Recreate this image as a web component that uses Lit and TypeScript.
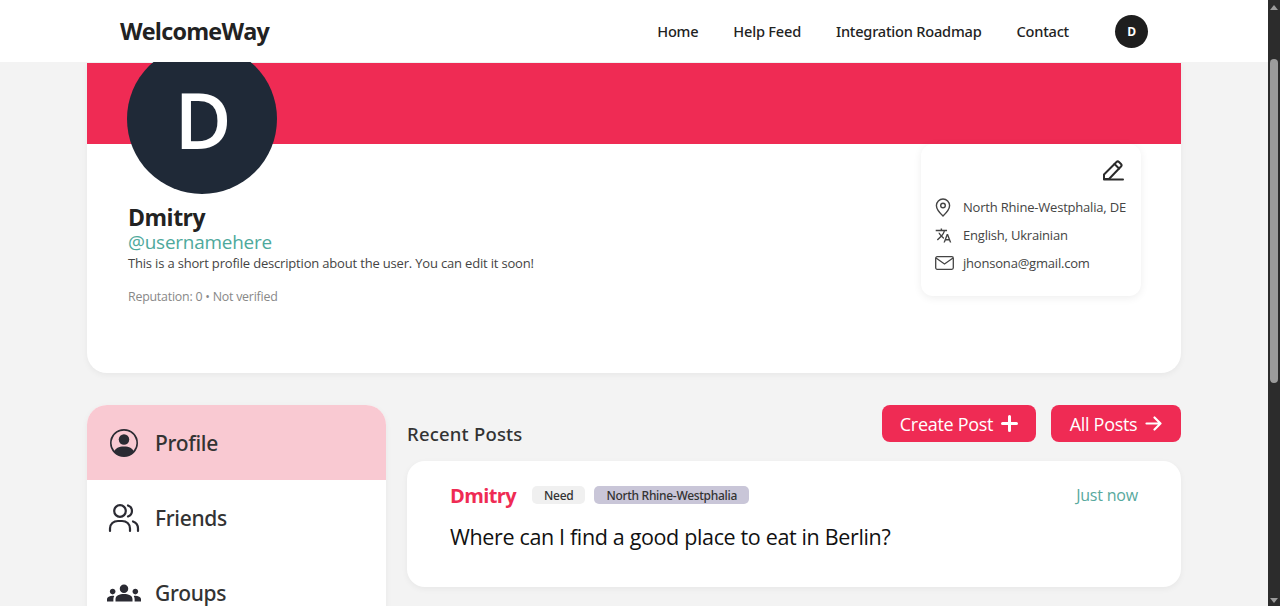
import { LitElement, html, css } from "lit";
import { customElement } from "lit/decorators.js";

@customElement("app-root")
export class AppRoot extends LitElement {
  static styles = css`
    :host { display: block; height: 606px; overflow: hidden; font-family: "Open Sans", "Noto Sans", sans-serif; background: #f3f3f3; color: #222; }
    * { box-sizing: border-box; }
    .shell { display: flex; height: 606px; overflow: hidden; }
    .page { width: 1268px; flex: none; height: 606px; overflow: hidden; }
    .scrollbar { width: 12px; flex: none; background: #2c2c2c; display: flex; flex-direction: column; align-items: center; justify-content: space-between; padding: 5px 0 3px; }
    .thumb { width: 8px; height: 324px; background: #9b9b9b; border-radius: 4px; margin-top: 49px; margin-bottom: auto; }
    .arrow-up { width: 0; height: 0; border-left: 4px solid transparent; border-right: 4px solid transparent; border-bottom: 5px solid #9b9b9b; }
    .arrow-down { width: 0; height: 0; border-left: 4px solid transparent; border-right: 4px solid transparent; border-top: 5px solid #9b9b9b; }
    header { position: relative; z-index: 2; height: 62px; background: #fff; display: flex; align-items: center; padding: 0 120px; }
    .logo { font-size: 23.4px; font-weight: 700; color: #222; letter-spacing: -0.78px; flex: 1; }
    nav { display: flex; align-items: center; gap: 35px; font-family: "Noto Sans", sans-serif; font-size: 14.6px; font-weight: 500; color: #222; letter-spacing: -0.22px; }
    .mini { width: 33px; height: 33px; border-radius: 50%; background: #1e1e1e; color: #fff; font-family: "Open Sans", sans-serif; font-size: 12px; font-weight: 700; display: flex; align-items: center; justify-content: center; margin-left: 11px; }
    main { padding: 1px 0 0 87px; width: 1181px; }
    .card { background: #fff; border-radius: 0 0 20px 20px; height: 310px; box-shadow: 0 2px 6px rgba(0,0,0,.05); display: flex; flex-direction: column; }
    .banner { height: 81px; background: #ef2b54; flex: none; }
    .body { display: flex; justify-content: space-between; padding: 0 40px; flex: 1; }
    .who { display: flex; flex-direction: column; }
    .avatar { width: 150px; height: 150px; border-radius: 50%; background: #1f2937; color: #fff; font-size: 78px; font-weight: 600; display: flex; align-items: center; justify-content: center; margin-top: -100px; position: relative; padding-left: 2px; }
    .texts { padding-left: 1px; }
    .name { font-size: 23px; font-weight: 700; color: #222; line-height: 28px; margin-top: 9px; letter-spacing: -0.5px; }
    .handle { font-size: 18.9px; color: #4ea99c; line-height: 22px; letter-spacing: -0.2px; }
    .bio { font-size: 13px; color: #444; line-height: 20px; letter-spacing: -0.18px; }
    .rep { font-size: 12.4px; color: #888; line-height: 18px; margin-top: 15px; letter-spacing: -0.23px; }
    .info { width: 220px; height: 152px; background: #fff; border-radius: 12px; box-shadow: 0 2px 8px rgba(0,0,0,.07); padding: 15px 14px 0 14px; display: flex; flex-direction: column; overflow: hidden; }
    .edit { align-self: flex-end; height: 22px; margin-right: 3px; margin-bottom: 12px; display: block; }
    .line { display: flex; align-items: center; font-size: 13px; color: #444; height: 28.2px; white-space: nowrap; letter-spacing: -0.2px; }
    .line .ic { width: 28px; flex: none; display: flex; align-items: center; }
    .lower { display: flex; gap: 21px; margin-top: 32px; }
    .side { width: 299px; flex: none; background: #fff; border-radius: 20px 20px 0 0; height: 220px; overflow: hidden; box-shadow: 0 2px 6px rgba(0,0,0,.05); }
    .tab { height: 75px; display: flex; align-items: center; gap: 14px; padding-left: 20px; font-family: "Noto Sans", sans-serif; font-size: 21px; font-weight: 500; color: #333; letter-spacing: -0.3px; }
    .tab.active { background: #f9c9d2; }
    .tab .ico { width: 34px; display: flex; justify-content: center; flex: none; }
    .content { flex: 1; min-width: 0; }
    .head { display: flex; align-items: flex-end; justify-content: space-between; height: 37px; }
    .head h2 { margin: 0; font-family: "Noto Sans", sans-serif; font-size: 18.5px; font-weight: 500; color: #333; line-height: 24px; position: relative; top: 4px; letter-spacing: 0.2px; }
    .btns { display: flex; gap: 15px; align-self: stretch; }
    .btn { height: 37px; background: #ef2b54; color: #fff; border-radius: 8px; display: flex; align-items: center; justify-content: center; gap: 8px; font-size: 18px; letter-spacing: -0.3px; }
    .b1 { width: 154px; } .b2 { width: 130px; }
    .post { margin-top: 19px; background: #fff; border-radius: 18px; height: 126px; padding: 21px 43px 0; box-shadow: 0 2px 6px rgba(0,0,0,.05); }
    .meta { display: flex; align-items: center; height: 26px; }
    .author { font-size: 20px; font-weight: 700; color: #ef2b54; letter-spacing: -0.6px; margin-right: 16px; }
    .tag { height: 18px; border-radius: 5px; font-family: "Noto Sans", sans-serif; font-size: 12px; font-weight: 500; color: #333; display: flex; align-items: center; padding: 0 12px; margin-right: 9px; letter-spacing: -0.3px; }
    .tag.need { background: #f0f0f0; }
    .tag.region { background: #c9c6d8; }
    .time { margin-left: auto; font-size: 16px; color: #57a99e; letter-spacing: -0.2px; }
    .text { margin-top: 14px; font-size: 21.5px; color: #111; line-height: 30px; letter-spacing: -0.35px; }
  `;

  render() {
    return html`<div class="shell">
      <div class="page">
        <header>
          <div class="logo">WelcomeWay</div>
          <nav>
            <span>Home</span><span>Help Feed</span><span>Integration Roadmap</span><span>Contact</span>
            <div class="mini">D</div>
          </nav>
        </header>
        <main>
          <section class="card">
            <div class="banner"></div>
            <div class="body">
              <div class="who">
                <div class="avatar">D</div>
                <div class="texts">
                  <div class="name">Dmitry</div>
                  <div class="handle">@usernamehere</div>
                  <div class="bio">This is a short profile description about the user. You can edit it soon!</div>
                  <div class="rep">Reputation: 0 • Not verified</div>
                </div>
              </div>
              <aside class="info">
                <svg class="edit" width="22" height="22" viewBox="0 0 22 22" fill="none" stroke="#2b2b2b" stroke-width="2" stroke-linejoin="round" stroke-linecap="round">
                  <path d="M2 15.500 14.500 3a1.800 1.800 0 0 1 2.500 0l2 2a1.800 1.800 0 0 1 0 2.500L7 20H2z"/><path d="M12.500 5l4.500 4.500"/><path d="M2 20.500h19"/>
                </svg>
                <div class="line"><span class="ic"><svg width="16" height="19" viewBox="0 0 16 19" fill="none" stroke="#444" stroke-width="1.400"><path d="M8 1a6.600 6.600 0 0 0-6.600 6.600C1.400 12 8 18 8 18s6.600-6 6.600-10.400A6.600 6.600 0 0 0 8 1z"/><circle cx="8" cy="7.500" r="2.300"/></svg></span>North Rhine-Westphalia, DE</div>
                <div class="line"><span class="ic"><svg width="17" height="17" viewBox="0 0 24 24" fill="#444"><path d="M12.870 15.070l-2.540-2.510.030-.030c1.740-1.940 2.980-4.170 3.710-6.530H17V4h-7V2H8v2H1v1.990h11.170C11.500 7.920 10.440 9.750 9 11.350 8.070 10.320 7.300 9.190 6.690 8h-2c.730 1.630 1.730 3.170 2.980 4.560l-5.090 5.020L4 19l5-5 3.110 3.110.760-2.040zM18.500 10h-2L12 22h2l1.120-3h4.750L21 22h2l-4.500-12zm-2.620 7l1.620-4.330L19.120 17h-3.240z"/></svg></span>English, Ukrainian</div>
                <div class="line"><span class="ic"><svg width="19" height="14" viewBox="0 0 19 14" fill="none" stroke="#444" stroke-width="1.300"><rect x=".7" y=".7" width="17.600" height="12.600" rx="1.500"/><path d="M1 2l8.500 6L18 2"/></svg></span>jhonsona@gmail.com</div>
              </aside>
            </div>
          </section>
          <div class="lower">
            <div class="side">
              <div class="tab active"><span class="ico"><svg width="28" height="28" viewBox="0 0 16 16" fill="#2b2b33"><path d="M11 6a3 3 0 1 1-6 0 3 3 0 0 1 6 0z"/><path fill-rule="evenodd" d="M0 8a8 8 0 1 1 16 0A8 8 0 0 1 0 8zm8-7a7 7 0 0 0-5.468 11.370C3.242 11.226 4.805 10 8 10s4.757 1.225 5.468 2.370A7 7 0 0 0 8 1z"/></svg></span>Profile</div>
              <div class="tab"><span class="ico"><svg width="32" height="30" viewBox="0 0 32 30" fill="none" stroke="#2b2b33" stroke-width="2.200" stroke-linecap="round"><circle cx="12" cy="8" r="5.800"/><path d="M2 28v-2.500C2 21 5.500 18 10 18h4c4.500 0 8 3 8 7.500V28"/><path d="M20 2.500a5.800 5.800 0 0 1 0 11"/><path d="M25 18.500c2.900 1 5 3.500 5 7V28"/></svg></span>Friends</div>
              <div class="tab"><span class="ico"><svg width="34" height="34" viewBox="0 0 24 24" fill="#2b2b33"><path d="M12 12.750c1.630 0 3.070.390 4.240.900 1.080.480 1.760 1.560 1.760 2.730V18H6v-1.610c0-1.180.680-2.260 1.760-2.740 1.170-.520 2.610-.900 4.240-.900zM4 13c1.100 0 2-.900 2-2s-.900-2-2-2-2 .900-2 2 .900 2 2 2zm1.130 1.100C4.760 14.040 4.390 14 4 14c-.990 0-1.930.210-2.780.580C.480 14.900 0 15.620 0 16.430V18h4.500v-1.610c0-.830.230-1.610.630-2.290zM20 13c1.100 0 2-.900 2-2s-.900-2-2-2-2 .900-2 2 .900 2 2 2zm4 3.430c0-.810-.480-1.530-1.220-1.850C21.930 14.210 20.990 14 20 14c-.390 0-.760.040-1.130.100.400.680.630 1.460.630 2.290V18H24v-1.570zM12 6c1.660 0 3 1.340 3 3s-1.340 3-3 3-3-1.340-3-3 1.340-3 3-3z"/></svg></span>Groups</div>
            </div>
            <div class="content">
              <div class="head">
                <h2>Recent Posts</h2>
                <div class="btns">
                  <div class="btn b1">Create Post <svg width="17" height="17" viewBox="0 0 17 17" stroke="#fff" stroke-width="3" stroke-linecap="round"><path d="M8.500 1.500v14M1.500 8.500h14"/></svg></div>
                  <div class="btn b2">All Posts <svg width="17" height="15" viewBox="0 0 17 15" fill="none" stroke="#fff" stroke-width="2.200" stroke-linecap="round" stroke-linejoin="round"><path d="M1.500 7.500h14M9.500 1.500l6 6-6 6"/></svg></div>
                </div>
              </div>
              <article class="post">
                <div class="meta">
                  <span class="author">Dmitry</span>
                  <span class="tag need">Need</span>
                  <span class="tag region">North Rhine-Westphalia</span>
                  <span class="time">Just now</span>
                </div>
                <div class="text">Where can I find a good place to eat in Berlin?</div>
              </article>
            </div>
          </div>
        </main>
      </div>
      <div class="scrollbar"><div class="arrow-up"></div><div class="thumb"></div><div class="arrow-down"></div></div>
    </div>`;
  }
}
